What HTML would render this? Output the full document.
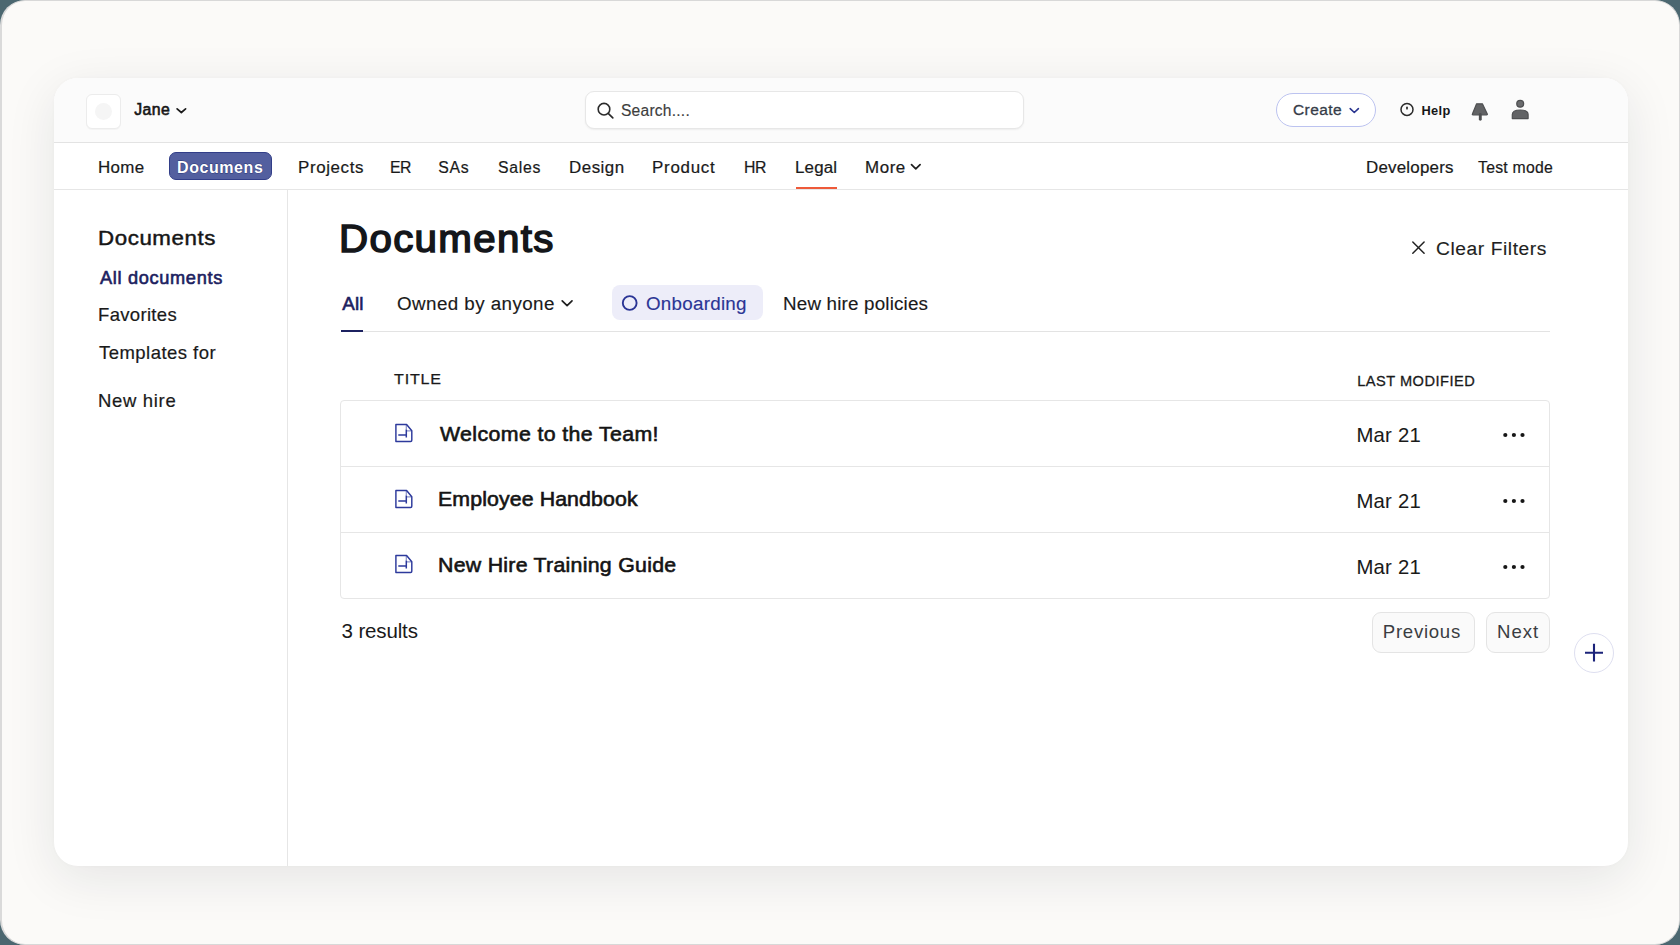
<!DOCTYPE html>
<html><head><meta charset="utf-8">
<style>
html,body{margin:0;padding:0;width:1680px;height:945px;overflow:hidden;background:#4b6770;}
body{font-family:"Liberation Sans",sans-serif;color:#1a1a1a;}
#frame{position:absolute;left:0;top:0;width:1677px;height:943px;border:1px solid #d8d8d8;border-left:2px solid #dadada;border-radius:25px;background:#fbfaf8;overflow:hidden;}
#card{position:absolute;left:54px;top:78px;width:1574px;height:788px;border-radius:24px;background:#fff;overflow:hidden;box-shadow:0 12px 50px rgba(20,30,45,0.095),0 0 4px rgba(20,30,45,0.02);}
#hdr{position:absolute;left:0;top:0;width:1574px;height:64px;background:#fbfbfb;border-bottom:1px solid #e3e3e3;}
#navb{position:absolute;left:0;top:111px;width:1574px;height:1px;background:#e6e6e6;}
#side{position:absolute;left:233px;top:112px;width:1px;height:676px;background:#e6e6e6;}
.a{position:absolute;}
.t{position:absolute;white-space:nowrap;line-height:1;}
</style></head>
<body>
<div id="frame"></div>
<div id="card">
  <div id="hdr"></div>
  <div id="navb"></div>
  <div id="side"></div>
</div>

<!-- header components -->
<div class="a" style="left:85.5px;top:93.5px;width:33.5px;height:33.5px;border:1px solid #ececec;border-radius:6px;background:#fff;box-shadow:0 1px 1px rgba(0,0,0,0.03);"></div>
<div class="a" style="left:95px;top:102.5px;width:17px;height:17px;border-radius:50%;background:#f5f5f5;"></div>
<svg class="a" style="left:175px;top:106px" width="13" height="9" viewBox="0 0 13 9"><path d="M2.1 2.8 L6.35 6.5 L10.6 2.8" fill="none" stroke="#1a1a1a" stroke-width="1.7" stroke-linecap="round" stroke-linejoin="round"/></svg>
<div class="a" style="left:585px;top:91px;width:437px;height:36px;border:1px solid #e7e7e7;border-radius:9px;background:#fff;box-shadow:0 1px 2px rgba(0,0,0,0.06);"></div>
<svg class="a" style="left:595px;top:101px" width="20" height="20" viewBox="0 0 20 20"><circle cx="9" cy="8.2" r="5.8" fill="none" stroke="#2b2b2b" stroke-width="1.6"/><path d="M13.2 12.4 L17.8 16.8" stroke="#2b2b2b" stroke-width="1.7" stroke-linecap="round"/></svg>
<div class="a" style="left:1276px;top:93px;width:97.5px;height:31.5px;border:1px solid #bcc3f0;border-radius:17px;background:#fff;"></div>
<svg class="a" style="left:1348px;top:105.5px" width="13" height="9" viewBox="0 0 13 9"><path d="M2.2 2.6 L6.3 6.5 L10.4 2.6" fill="none" stroke="#2a3590" stroke-width="1.6" stroke-linecap="round" stroke-linejoin="round"/></svg>
<svg class="a" style="left:1398px;top:100px" width="18" height="19" viewBox="0 0 18 19"><circle cx="9" cy="9.4" r="6" fill="none" stroke="#2b2b2b" stroke-width="1.5"/><path d="M9 7.3 V8.7" stroke="#2b2b2b" stroke-width="1.7" stroke-linecap="round"/></svg>
<svg class="a" style="left:1466px;top:96px" width="70" height="30" viewBox="0 0 70 30">
 <path d="M10.6 7.8 H16.4 L21.3 17.9 Q21.6 18.8 20.6 18.8 H7.0 Q6.0 18.8 6.4 17.9 Z" fill="#626365" stroke="#4e4f51" stroke-width="1.2" stroke-linejoin="round"/>
 <path d="M14.3 18.5 V23.3" stroke="#4e4f51" stroke-width="2.9" stroke-linecap="round"/>
 <circle cx="54.2" cy="7.8" r="3.4" fill="#6a6b6d" stroke="#4e4f51" stroke-width="1.3"/>
 <path d="M46.3 22.6 V18.6 Q46.3 14.0 54.2 14.0 Q62.1 14.0 62.1 18.6 V22.6 Z" fill="#626365" stroke="#4e4f51" stroke-width="1.2" stroke-linejoin="round"/>
</svg>
<!-- nav -->
<div class="a" style="left:169px;top:152px;width:100.5px;height:25.5px;border:1.5px solid #323e88;border-radius:7px;background:#535f9f;"></div>
<div class="a" style="left:796px;top:187px;width:41px;height:2px;background:#ee5a3a;"></div>
<svg class="a" style="left:909px;top:161.5px" width="14" height="10" viewBox="0 0 14 10"><path d="M2.5 2.6 L6.8 6.9 L11.1 2.6" fill="none" stroke="#1f1f1f" stroke-width="1.7" stroke-linecap="round" stroke-linejoin="round"/></svg>
<!-- clear filters x -->
<svg class="a" style="left:1409px;top:238px" width="19" height="19" viewBox="0 0 19 19"><path d="M3.8 4 L15.1 15.3 M15.1 4 L3.8 15.3" stroke="#222" stroke-width="1.5" stroke-linecap="round"/></svg>
<!-- tabs -->
<div class="a" style="left:341px;top:330.5px;width:1209px;height:1px;background:#e3e3e3;"></div>
<div class="a" style="left:341px;top:329.5px;width:22px;height:2.5px;background:#1c2160;"></div>
<svg class="a" style="left:560px;top:297.8px" width="15" height="11" viewBox="0 0 15 11"><path d="M2.2 2.8 L7.1 7.7 L12 2.8" fill="none" stroke="#1f1f1f" stroke-width="1.7" stroke-linecap="round" stroke-linejoin="round"/></svg>
<div class="a" style="left:612px;top:285px;width:151px;height:34.5px;border-radius:8px;background:#ededf9;"></div>
<svg class="a" style="left:619px;top:292px" width="22" height="22" viewBox="0 0 22 22"><circle cx="10.7" cy="11" r="6.9" fill="none" stroke="#2b3595" stroke-width="1.9"/></svg>
<!-- table -->
<div class="a" style="left:340px;top:400px;width:1208px;height:197px;border:1px solid #e6e6e6;border-radius:4px;background:#fff;"></div>
<div class="a" style="left:341px;top:466px;width:1208px;height:1px;background:#e6e6e6;"></div>
<div class="a" style="left:341px;top:531.5px;width:1208px;height:1px;background:#e6e6e6;"></div>
<svg class="a" style="left:392px;top:421px" width="24" height="24" viewBox="0 0 24 24"><path d="M3.9 3.5 H14.6 L19.8 9.8 V19.3 Q19.8 20.5 18.6 20.5 H3.9 Z" fill="none" stroke="#2d3a9c" stroke-width="1.45" stroke-linejoin="round"/><path d="M14.3 8.5 V16.4 M6.3 13.9 H14.3" fill="none" stroke="#2d3a9c" stroke-width="1.5"/><path d="M14.3 4 V8.5 M14.6 9.9 H19.4" fill="none" stroke="#2d3a9c" stroke-width="1.2" opacity="0.55"/></svg>
<svg class="a" style="left:392px;top:486.5px" width="24" height="24" viewBox="0 0 24 24"><path d="M3.9 3.5 H14.6 L19.8 9.8 V19.3 Q19.8 20.5 18.6 20.5 H3.9 Z" fill="none" stroke="#2d3a9c" stroke-width="1.45" stroke-linejoin="round"/><path d="M14.3 8.5 V16.4 M6.3 13.9 H14.3" fill="none" stroke="#2d3a9c" stroke-width="1.5"/><path d="M14.3 4 V8.5 M14.6 9.9 H19.4" fill="none" stroke="#2d3a9c" stroke-width="1.2" opacity="0.55"/></svg>
<svg class="a" style="left:392px;top:552px" width="24" height="24" viewBox="0 0 24 24"><path d="M3.9 3.5 H14.6 L19.8 9.8 V19.3 Q19.8 20.5 18.6 20.5 H3.9 Z" fill="none" stroke="#2d3a9c" stroke-width="1.45" stroke-linejoin="round"/><path d="M14.3 8.5 V16.4 M6.3 13.9 H14.3" fill="none" stroke="#2d3a9c" stroke-width="1.5"/><path d="M14.3 4 V8.5 M14.6 9.9 H19.4" fill="none" stroke="#2d3a9c" stroke-width="1.2" opacity="0.55"/></svg>
<svg class="a" style="left:1500px;top:430.3px" width="28" height="10" viewBox="0 0 28 10"><circle cx="5.3" cy="5" r="2.1" fill="#161616"/><circle cx="13.9" cy="5" r="2.1" fill="#161616"/><circle cx="22.5" cy="5" r="2.1" fill="#161616"/></svg>
<svg class="a" style="left:1500px;top:496px" width="28" height="10" viewBox="0 0 28 10"><circle cx="5.3" cy="5" r="2.1" fill="#161616"/><circle cx="13.9" cy="5" r="2.1" fill="#161616"/><circle cx="22.5" cy="5" r="2.1" fill="#161616"/></svg>
<svg class="a" style="left:1500px;top:561.7px" width="28" height="10" viewBox="0 0 28 10"><circle cx="5.3" cy="5" r="2.1" fill="#161616"/><circle cx="13.9" cy="5" r="2.1" fill="#161616"/><circle cx="22.5" cy="5" r="2.1" fill="#161616"/></svg>

<div class="a" style="left:1372px;top:612px;width:101px;height:39px;border:1px solid #e4e4e4;border-radius:9px;background:#fafafa;"></div>
<div class="a" style="left:1486px;top:612px;width:62px;height:39px;border:1px solid #e4e4e4;border-radius:9px;background:#fafafa;"></div>
<div class="a" style="left:1574px;top:633px;width:38px;height:38px;border:1px solid #dedff0;border-radius:50%;background:#fff;"></div>
<svg class="a" style="left:1582px;top:641px" width="24" height="24" viewBox="0 0 24 24"><path d="M12 2.8 V20.6 M3 11.7 H21" stroke="#1b237a" stroke-width="2.1"/></svg>

<div class="t" id="jane" style="left:134.20px;top:101.87px;font-size:15.8px;font-weight:400;color:#161616;letter-spacing:0.450px;-webkit-text-stroke:0.6px #161616;">Jane</div>
<div class="t" id="home" style="left:98.00px;top:159.57px;font-size:15.8px;font-weight:400;color:#1a1a1a;letter-spacing:0.337px;-webkit-text-stroke:0.2px #1a1a1a;transform:scaleX(1.07);transform-origin:0 0;">Home</div>
<div class="t" id="projects" style="left:298.00px;top:159.57px;font-size:15.8px;font-weight:400;color:#1a1a1a;letter-spacing:0.591px;-webkit-text-stroke:0.2px #1a1a1a;transform:scaleX(1.07);transform-origin:0 0;">Projects</div>
<div class="t" id="er" style="left:390.00px;top:159.57px;font-size:15.8px;font-weight:400;color:#1a1a1a;letter-spacing:-0.600px;-webkit-text-stroke:0.2px #1a1a1a;">ER</div>
<div class="t" id="sas" style="left:438.20px;top:159.57px;font-size:15.8px;font-weight:400;color:#1a1a1a;letter-spacing:0.700px;-webkit-text-stroke:0.2px #1a1a1a;">SAs</div>
<div class="t" id="sales" style="left:498.00px;top:159.57px;font-size:15.8px;font-weight:400;color:#1a1a1a;letter-spacing:0.750px;-webkit-text-stroke:0.2px #1a1a1a;">Sales</div>
<div class="t" id="design" style="left:569.00px;top:159.57px;font-size:15.8px;font-weight:400;color:#1a1a1a;letter-spacing:0.480px;-webkit-text-stroke:0.2px #1a1a1a;transform:scaleX(1.07);transform-origin:0 0;">Design</div>
<div class="t" id="product" style="left:652.00px;top:159.57px;font-size:15.8px;font-weight:400;color:#1a1a1a;letter-spacing:0.689px;-webkit-text-stroke:0.2px #1a1a1a;transform:scaleX(1.07);transform-origin:0 0;">Product</div>
<div class="t" id="hr" style="left:744.00px;top:159.57px;font-size:15.8px;font-weight:400;color:#1a1a1a;letter-spacing:-0.500px;-webkit-text-stroke:0.2px #1a1a1a;">HR</div>
<div class="t" id="legal" style="left:795.00px;top:159.57px;font-size:15.8px;font-weight:400;color:#1a1a1a;letter-spacing:0.166px;-webkit-text-stroke:0.2px #1a1a1a;transform:scaleX(1.07);transform-origin:0 0;">Legal</div>
<div class="t" id="more" style="left:865.00px;top:159.57px;font-size:15.8px;font-weight:400;color:#1a1a1a;letter-spacing:0.550px;-webkit-text-stroke:0.2px #1a1a1a;transform:scaleX(1.07);transform-origin:0 0;">More</div>
<div class="t" id="dev" style="left:1366.00px;top:159.57px;font-size:15.8px;font-weight:400;color:#1a1a1a;letter-spacing:0.207px;-webkit-text-stroke:0.2px #1a1a1a;transform:scaleX(1.07);transform-origin:0 0;">Developers</div>
<div class="t" id="test" style="left:1478.00px;top:159.57px;font-size:15.8px;font-weight:400;color:#1a1a1a;letter-spacing:0.250px;-webkit-text-stroke:0.2px #1a1a1a;">Test mode</div>
<div class="t" id="docpill" style="left:177.00px;top:160.40px;font-size:16px;font-weight:700;color:#fff;letter-spacing:0.571px;-webkit-text-stroke:0.8px #2a3675;paint-order:stroke fill;">Documens</div>
<div class="t" id="search" style="left:621.00px;top:102.74px;font-size:15.6px;font-weight:400;color:#3d3d3d;letter-spacing:0.222px;-webkit-text-stroke:0.15px #3d3d3d;">Search....</div>
<div class="t" id="create" style="left:1293.00px;top:101.83px;font-size:15.5px;font-weight:400;color:#363c48;letter-spacing:0.400px;-webkit-text-stroke:0.3px #363c48;">Create</div>
<div class="t" id="help" style="left:1421.40px;top:104.52px;font-size:12.8px;font-weight:700;color:#161616;letter-spacing:0.401px;">Help</div>
<div class="t" id="title" style="left:339.00px;top:220.30px;font-size:38px;font-weight:400;color:#14161a;letter-spacing:1.250px;-webkit-text-stroke:1.5px #14161a;transform:scaleX(1.06);transform-origin:0 0;">Documents</div>
<div class="t" id="clear" style="left:1436.00px;top:238.98px;font-size:19.2px;font-weight:400;color:#1f1f1f;letter-spacing:0.583px;-webkit-text-stroke:0.15px #1f1f1f;">Clear Filters</div>
<div class="t" id="sdocs" style="left:98.20px;top:228.34px;font-size:20.3px;font-weight:400;color:#161616;letter-spacing:0.520px;-webkit-text-stroke:0.45px #161616;transform:scaleX(1.1);transform-origin:0 0;">Documents</div>
<div class="t" id="salldocs" style="left:100.00px;top:269.13px;font-size:18.2px;font-weight:400;color:#1c2160;letter-spacing:0.666px;-webkit-text-stroke:0.6px #1c2160;">All documents</div>
<div class="t" id="sfav" style="left:98.00px;top:305.77px;font-size:18.5px;font-weight:400;color:#1a1a1a;letter-spacing:0.327px;-webkit-text-stroke:0.2px #1a1a1a;">Favorites</div>
<div class="t" id="stemp" style="left:99.00px;top:344.38px;font-size:18.5px;font-weight:400;color:#1a1a1a;letter-spacing:0.458px;-webkit-text-stroke:0.2px #1a1a1a;">Templates for</div>
<div class="t" id="snew" style="left:98.00px;top:392.27px;font-size:18.5px;font-weight:400;color:#1a1a1a;letter-spacing:0.669px;-webkit-text-stroke:0.2px #1a1a1a;">New hire</div>
<div class="t" id="tall" style="left:342.20px;top:295.02px;font-size:18.8px;font-weight:400;color:#1c2160;letter-spacing:0.200px;-webkit-text-stroke:0.6px #1c2160;">All</div>
<div class="t" id="towned" style="left:397.00px;top:295.02px;font-size:18.8px;font-weight:400;color:#1a1a1a;letter-spacing:0.429px;-webkit-text-stroke:0.15px #1a1a1a;">Owned by anyone</div>
<div class="t" id="tonb" style="left:646.00px;top:295.02px;font-size:18.8px;font-weight:400;color:#2b3595;letter-spacing:0.259px;-webkit-text-stroke:0.15px #2b3595;">Onboarding</div>
<div class="t" id="tnew" style="left:783.00px;top:295.02px;font-size:18.8px;font-weight:400;color:#1a1a1a;letter-spacing:0.188px;-webkit-text-stroke:0.15px #1a1a1a;">New hire policies</div>
<div class="t" id="thtitle" style="left:394.00px;top:371.08px;font-size:15.2px;font-weight:400;color:#1a1a1a;letter-spacing:0.750px;-webkit-text-stroke:0.25px #1a1a1a;transform:scaleX(1.06);transform-origin:0 0;">TITLE</div>
<div class="t" id="thlast" style="left:1357.20px;top:373.59px;font-size:14.6px;font-weight:400;color:#1a1a1a;letter-spacing:0.497px;-webkit-text-stroke:0.3px #1a1a1a;">LAST MODIFIED</div>
<div class="t" id="row0" style="left:440.30px;top:423.88px;font-size:20.5px;font-weight:400;color:#141414;letter-spacing:0.364px;-webkit-text-stroke:0.6px #141414;transform:scaleX(1.04);transform-origin:0 0;">Welcome to the Team!</div>
<div class="t" id="row1" style="left:438.00px;top:489.38px;font-size:20.5px;font-weight:400;color:#141414;letter-spacing:0.097px;-webkit-text-stroke:0.6px #141414;transform:scaleX(1.04);transform-origin:0 0;">Employee Handbook</div>
<div class="t" id="row2" style="left:438.00px;top:555.18px;font-size:20.5px;font-weight:400;color:#141414;letter-spacing:0.257px;-webkit-text-stroke:0.6px #141414;transform:scaleX(1.04);transform-origin:0 0;">New Hire Training Guide</div>
<div class="t" id="mar0" style="left:1356.40px;top:424.94px;font-size:20.3px;font-weight:400;color:#1a1a1a;letter-spacing:0.260px;-webkit-text-stroke:0.05px #1a1a1a;">Mar 21</div>
<div class="t" id="mar1" style="left:1356.40px;top:490.75px;font-size:20.3px;font-weight:400;color:#1a1a1a;letter-spacing:0.260px;-webkit-text-stroke:0.05px #1a1a1a;">Mar 21</div>
<div class="t" id="mar2" style="left:1356.40px;top:556.75px;font-size:20.3px;font-weight:400;color:#1a1a1a;letter-spacing:0.260px;-webkit-text-stroke:0.05px #1a1a1a;">Mar 21</div>
<div class="t" id="results" style="left:341.60px;top:621.18px;font-size:20.5px;font-weight:400;color:#1a1a1a;letter-spacing:-0.148px;">3 results</div>
<div class="t" id="prev" style="left:1382.80px;top:623.29px;font-size:18.6px;font-weight:400;color:#3a3d42;letter-spacing:0.723px;">Previous</div>
<div class="t" id="next" style="left:1497.00px;top:623.29px;font-size:18.6px;font-weight:400;color:#3a3d42;letter-spacing:1.000px;">Next</div>
</body></html>
